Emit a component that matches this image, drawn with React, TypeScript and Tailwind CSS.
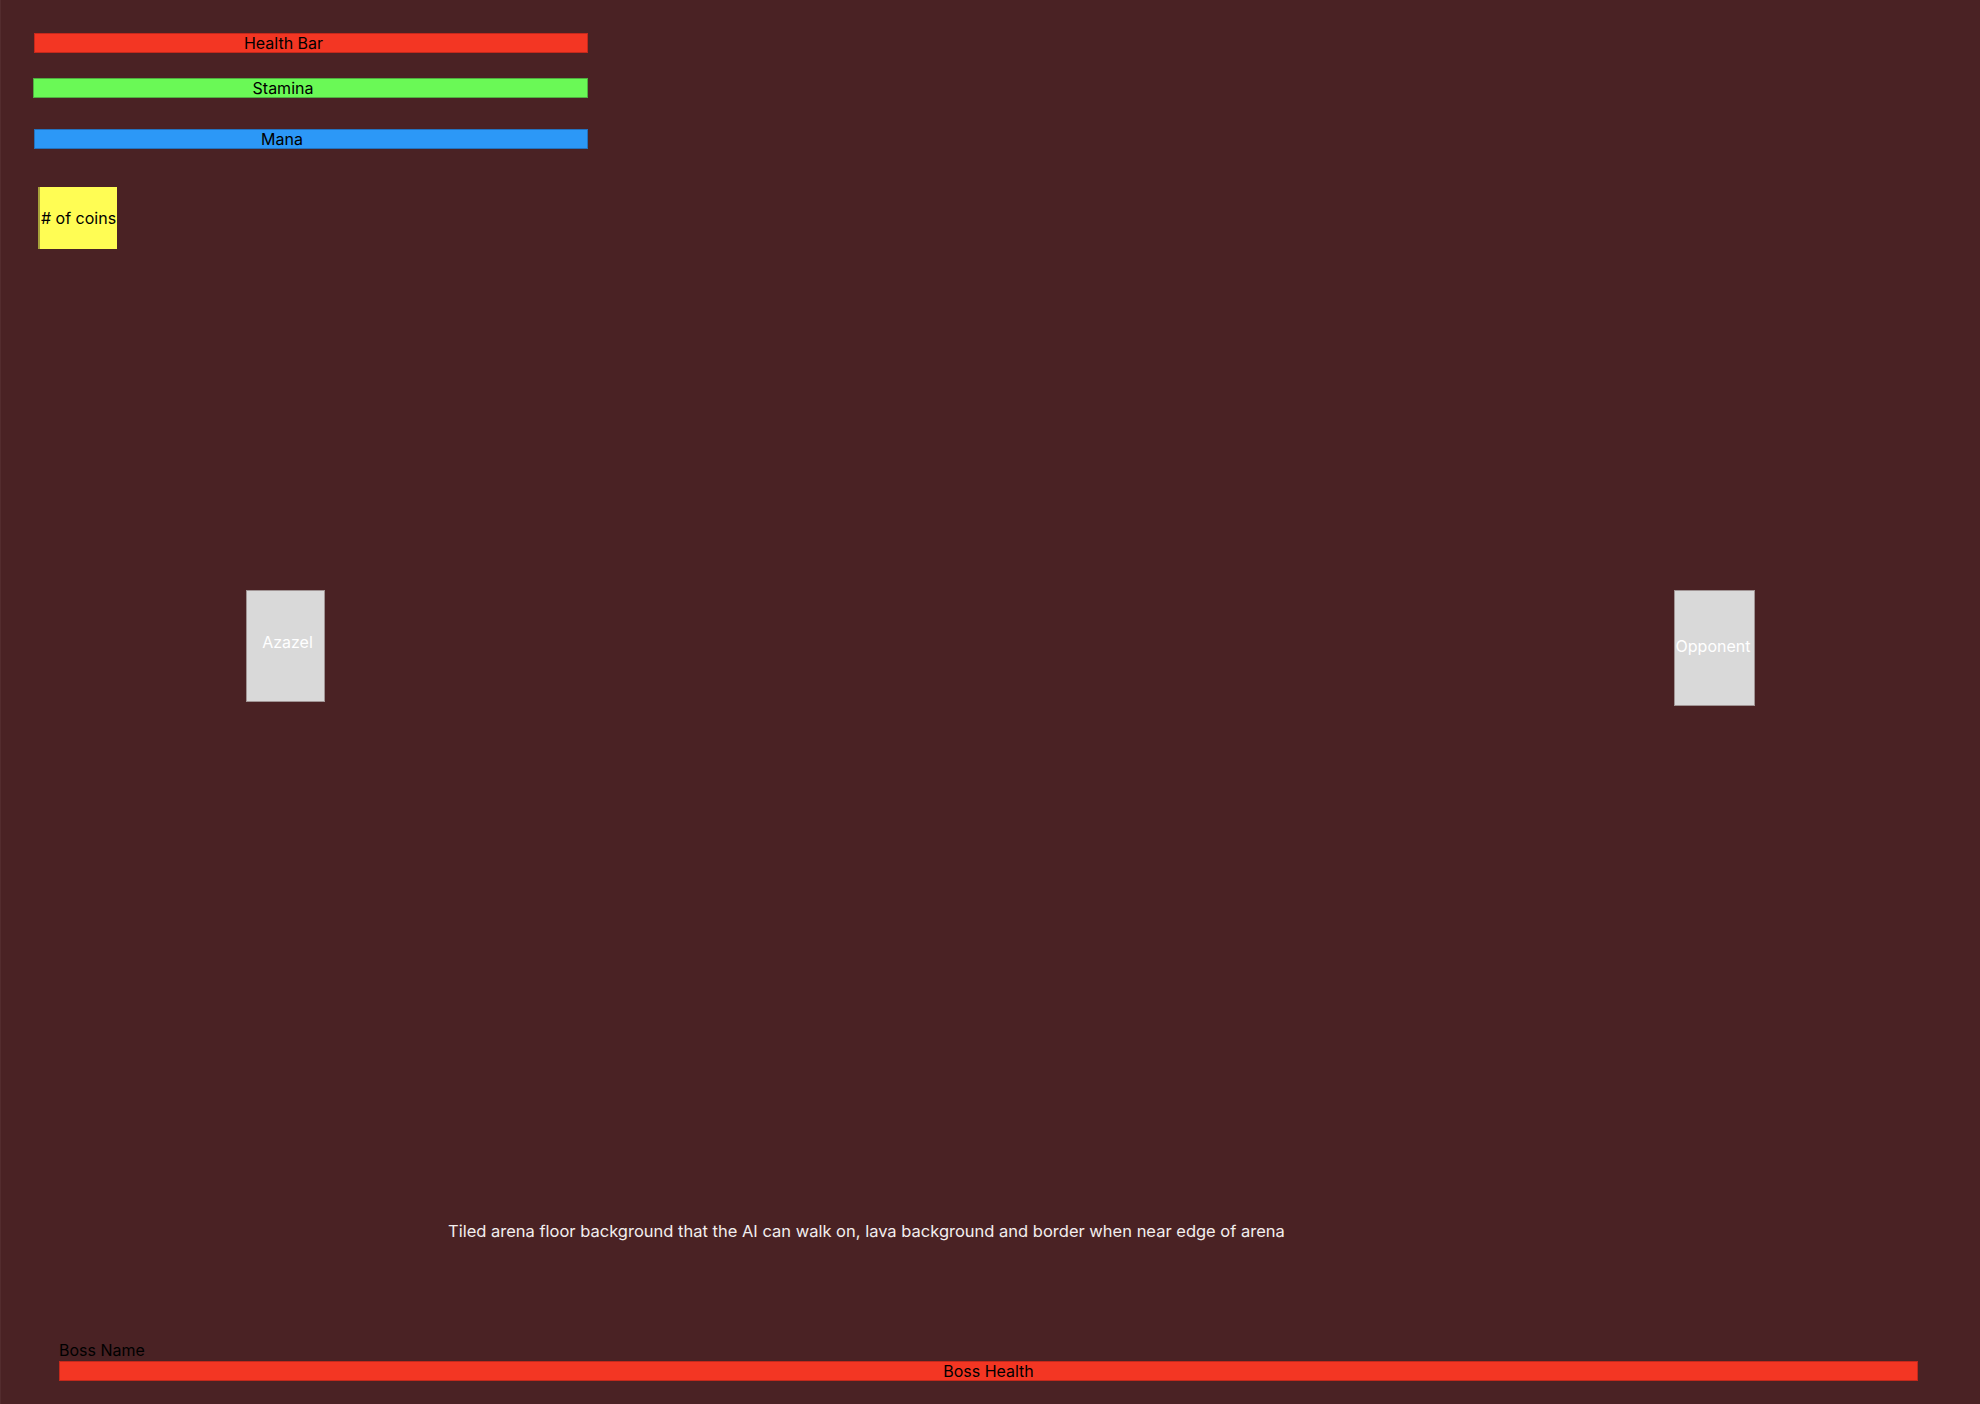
const FONT = "font-['Inter','Noto_Sans',sans-serif]"

function Bar({ label, className }: { label: string; className: string }) {
  return (
    <div className={`flex items-center justify-center pr-[55px] border text-[16px] leading-none text-black ${className}`}>
      {label}
    </div>
  )
}

function Fighter({ name, className }: { name: string; className: string }) {
  return (
    <div className={`flex items-center justify-center bg-[#d9d9d9] border border-[#a09494] text-[16px] text-white ${className}`}>
      {name}
    </div>
  )
}

export default function App() {
  return (
    <div className={`w-[1980px] h-[1404px] bg-[#4a2224] border-l border-[#532c2e] flex flex-col overflow-hidden ${FONT}`}>
      {/* Player HUD */}
      <div className="flex flex-col pt-[33px]">
        <Bar label="Health Bar" className="ml-[33px] w-[554px] h-[20px] bg-[#f33623] border-[#c4291c]" />
        <Bar label="Stamina" className="ml-[32px] w-[555px] h-[20px] mt-[25px] bg-[#6af956] border-[#4fb040]" />
        <Bar label="Mana" className="ml-[33px] w-[554px] h-[20px] mt-[31px] pr-[58px] bg-[#2c98f7] border-[#2372be]" />
        <div className="ml-[37px] mt-[38px] w-[79px] h-[62px] bg-[#fffd54] border-l-2 border-[#a7a23a] flex items-center justify-center text-[16px] text-black whitespace-nowrap">
          # of coins
        </div>
      </div>

      {/* Arena */}
      <div className="flex items-start mt-[341px]">
        <Fighter name="Azazel" className="ml-[245px] w-[79px] h-[112px] pl-[4px] pb-[8px]" />
        <Fighter name="Opponent" className="ml-[1349px] w-[81px] h-[116px] pb-[4px] pr-[3px]" />
      </div>

      <p className="ml-[447px] mt-[516px] text-[16.5px] leading-[19px] text-[#f2eeee]">
        Tiled arena floor background that the AI can walk on, lava background and border when near edge of arena
      </p>

      {/* Boss HUD */}
      <div className="flex flex-col ml-[58px] mt-[100px]">
        <p className="text-[16px] leading-[19px] text-black">Boss Name</p>
        <div className="w-[1859px] h-[20px] mt-[1px] bg-[#f33623] border border-[#c4291c] flex items-center justify-center text-[16px] leading-none text-black">
          Boss Health
        </div>
      </div>
    </div>
  )
}
